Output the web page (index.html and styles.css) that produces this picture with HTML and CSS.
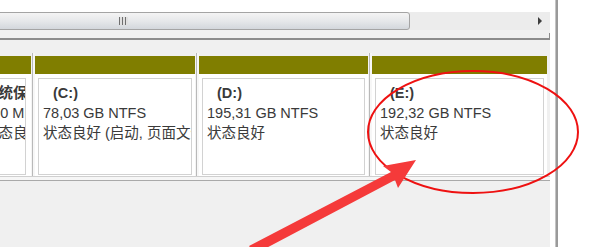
FILE: index.html
```html
<!DOCTYPE html>
<html lang="zh-CN">
  <head>
    <meta charset="UTF-8" />
    <meta name="viewport" content="width=device-width, initial-scale=1.0" />
    <title>磁盘管理</title>
    <link rel="stylesheet" href="styles.css">
  </head>
  <body>
    <div class="window">
      <div class="main">
        <div class="list-top"></div>

        <div class="hscroll">
          <div class="thumb">
            <span class="grip"></span>
          </div>
          <div class="track">
            <span class="arrow-right"></span>
          </div>
        </div>
        <div class="frame-edge">
          <span class="tick"></span>
        </div>
        <div class="spacer"></div>

        <!-- Разделы диска -->
        <div class="parts">
          <div class="part part-sys">
            <div class="part-head"></div>
            <div class="part-body">
              <div class="line bold">系统保留</div>
              <div class="line">100 MB NTFS</div>
              <div class="line">状态良好 (系统, 活动, 主分区)</div>
            </div>
          </div>
          <div class="divider"></div>
          <div class="part part-c">
            <div class="part-head"></div>
            <div class="part-body">
              <div class="line bold"><span class="lbl">(C:)</span></div>
              <div class="line">78,03 GB NTFS</div>
              <div class="line">状态良好 (启动, 页面文件, 故障转储, 主分区)</div>
            </div>
          </div>
          <div class="divider"></div>
          <div class="part part-d">
            <div class="part-head"></div>
            <div class="part-body">
              <div class="line bold"><span class="lbl">(D:)</span></div>
              <div class="line">195,31 GB NTFS</div>
              <div class="line">状态良好</div>
            </div>
          </div>
          <div class="divider"></div>
          <div class="part part-e">
            <div class="part-head"></div>
            <div class="part-body">
              <div class="line bold"><span class="lbl">(E:)</span></div>
              <div class="line">192,32 GB NTFS</div>
              <div class="line">状态良好</div>
            </div>
          </div>
        </div>

        <div class="sep"></div>
        <div class="lower"></div>
      </div>

      <div class="side">
        <div class="gutter"></div>
        <div class="vline"></div>
      </div>

      <!-- пометки поверх скриншота -->
      <svg class="marks" width="600" height="247" viewBox="0 0 600 247">
        <ellipse cx="473" cy="132" rx="105" ry="61" fill="none" stroke="#ee1111" stroke-width="2" />
        <polygon fill="#f53a3a" points="249,246 391,172 383,166 416,160 398,188 395,180 255,254" />
      </svg>
    </div>
  </body>
</html>
```

FILE: styles.css
```css
body {
  margin: 0;
  background: #fff;
  font-family: "Liberation Sans", "Noto Sans CJK SC", sans-serif;
  font-size: 14.5px;
  color: #3a3a3a;
}
.window {
  position: relative;
  width: 600px;
  height: 247px;
  overflow: hidden;
  display: flex;
}
.main {
  width: 550px;
  display: flex;
  flex-direction: column;
}
.list-top {
  height: 12px;
  background: #fff;
}
.hscroll {
  height: 18px;
  display: flex;
  background: #ececec;
}
.thumb {
  width: 420px;
  margin-left: -10px;
  box-sizing: border-box;
  border: 1px solid #a4a4a4;
  border-radius: 3px;
  background: linear-gradient(180deg, #f4f4f4, #e6e8ea 50%, #d3d7dc);
  display: flex;
  justify-content: center;
  align-items: center;
  padding-right: 167px;
  padding-left: 13px;
}
.grip {
  width: 9px;
  height: 8px;
  background: repeating-linear-gradient(90deg, #6f6f6f 0 1px, #e0e0e0 1px 3px);
}
.track {
  flex: 1;
  display: flex;
  justify-content: flex-end;
  align-items: center;
  padding-right: 8px;
}
.arrow-right {
  width: 0;
  height: 0;
  border-top: 4px solid transparent;
  border-bottom: 4px solid transparent;
  border-left: 4px solid #3d3d3d;
}
.frame-edge {
  height: 8px;
  background: #f0f0f0;
  border-bottom: 2px solid #8c8c8c;
  display: flex;
  justify-content: flex-end;
  align-items: flex-end;
}
.tick {
  width: 1px;
  height: 5px;
  background: #8c8c8c;
}
.spacer {
  height: 13px;
  background: #f0f0f0;
}
.parts {
  height: 123px;
  display: flex;
  background: #f0f0f0;
  padding-right: 3px;
}
.divider {
  width: 4px;
  flex: none;
  background: linear-gradient(90deg, #f4f4f4 1px, #b9b9b9 1px 2px, #f7f7f7 2px);
}
.part {
  flex: none;
  margin-top: 3px;
  background: #fff;
  display: flex;
  flex-direction: column;
}
.part-sys {
  width: 55px;
  margin-left: -24px;
}
.part-sys .part-body {
  margin-right: 5px;
}
.part-c {
  width: 160px;
}
.part-d {
  width: 169px;
}
.part-e {
  width: 175px;
}
.part-head {
  height: 18px;
  background: #807e00;
}
.part-body {
  height: 97px;
  margin: 4px 3px 1px;
  box-sizing: border-box;
  border: 1px solid #d2d2d2;
  padding: 4px 4px;
  overflow: hidden;
  white-space: nowrap;
}
.line {
  line-height: 20px;
}
.bold {
  font-weight: bold;
}
.lbl {
  padding-left: 10px;
}
.sep {
  height: 3px;
  background: #f6f6f6;
  border-top: 1px solid #cfcfcf;
  border-bottom: 1px solid #a9a9a9;
}
.lower {
  flex: 1;
  background: #f0f0f0;
}
.side {
  flex: 1;
  display: flex;
  background: #fff;
}
.gutter {
  width: 5px;
}
.vline {
  width: 3px;
  background: linear-gradient(90deg, #c4c4c4 1px, #9a9a9a 1px);
}
.marks {
  position: absolute;
  top: 0;
  left: 0;
  pointer-events: none;
}
```
